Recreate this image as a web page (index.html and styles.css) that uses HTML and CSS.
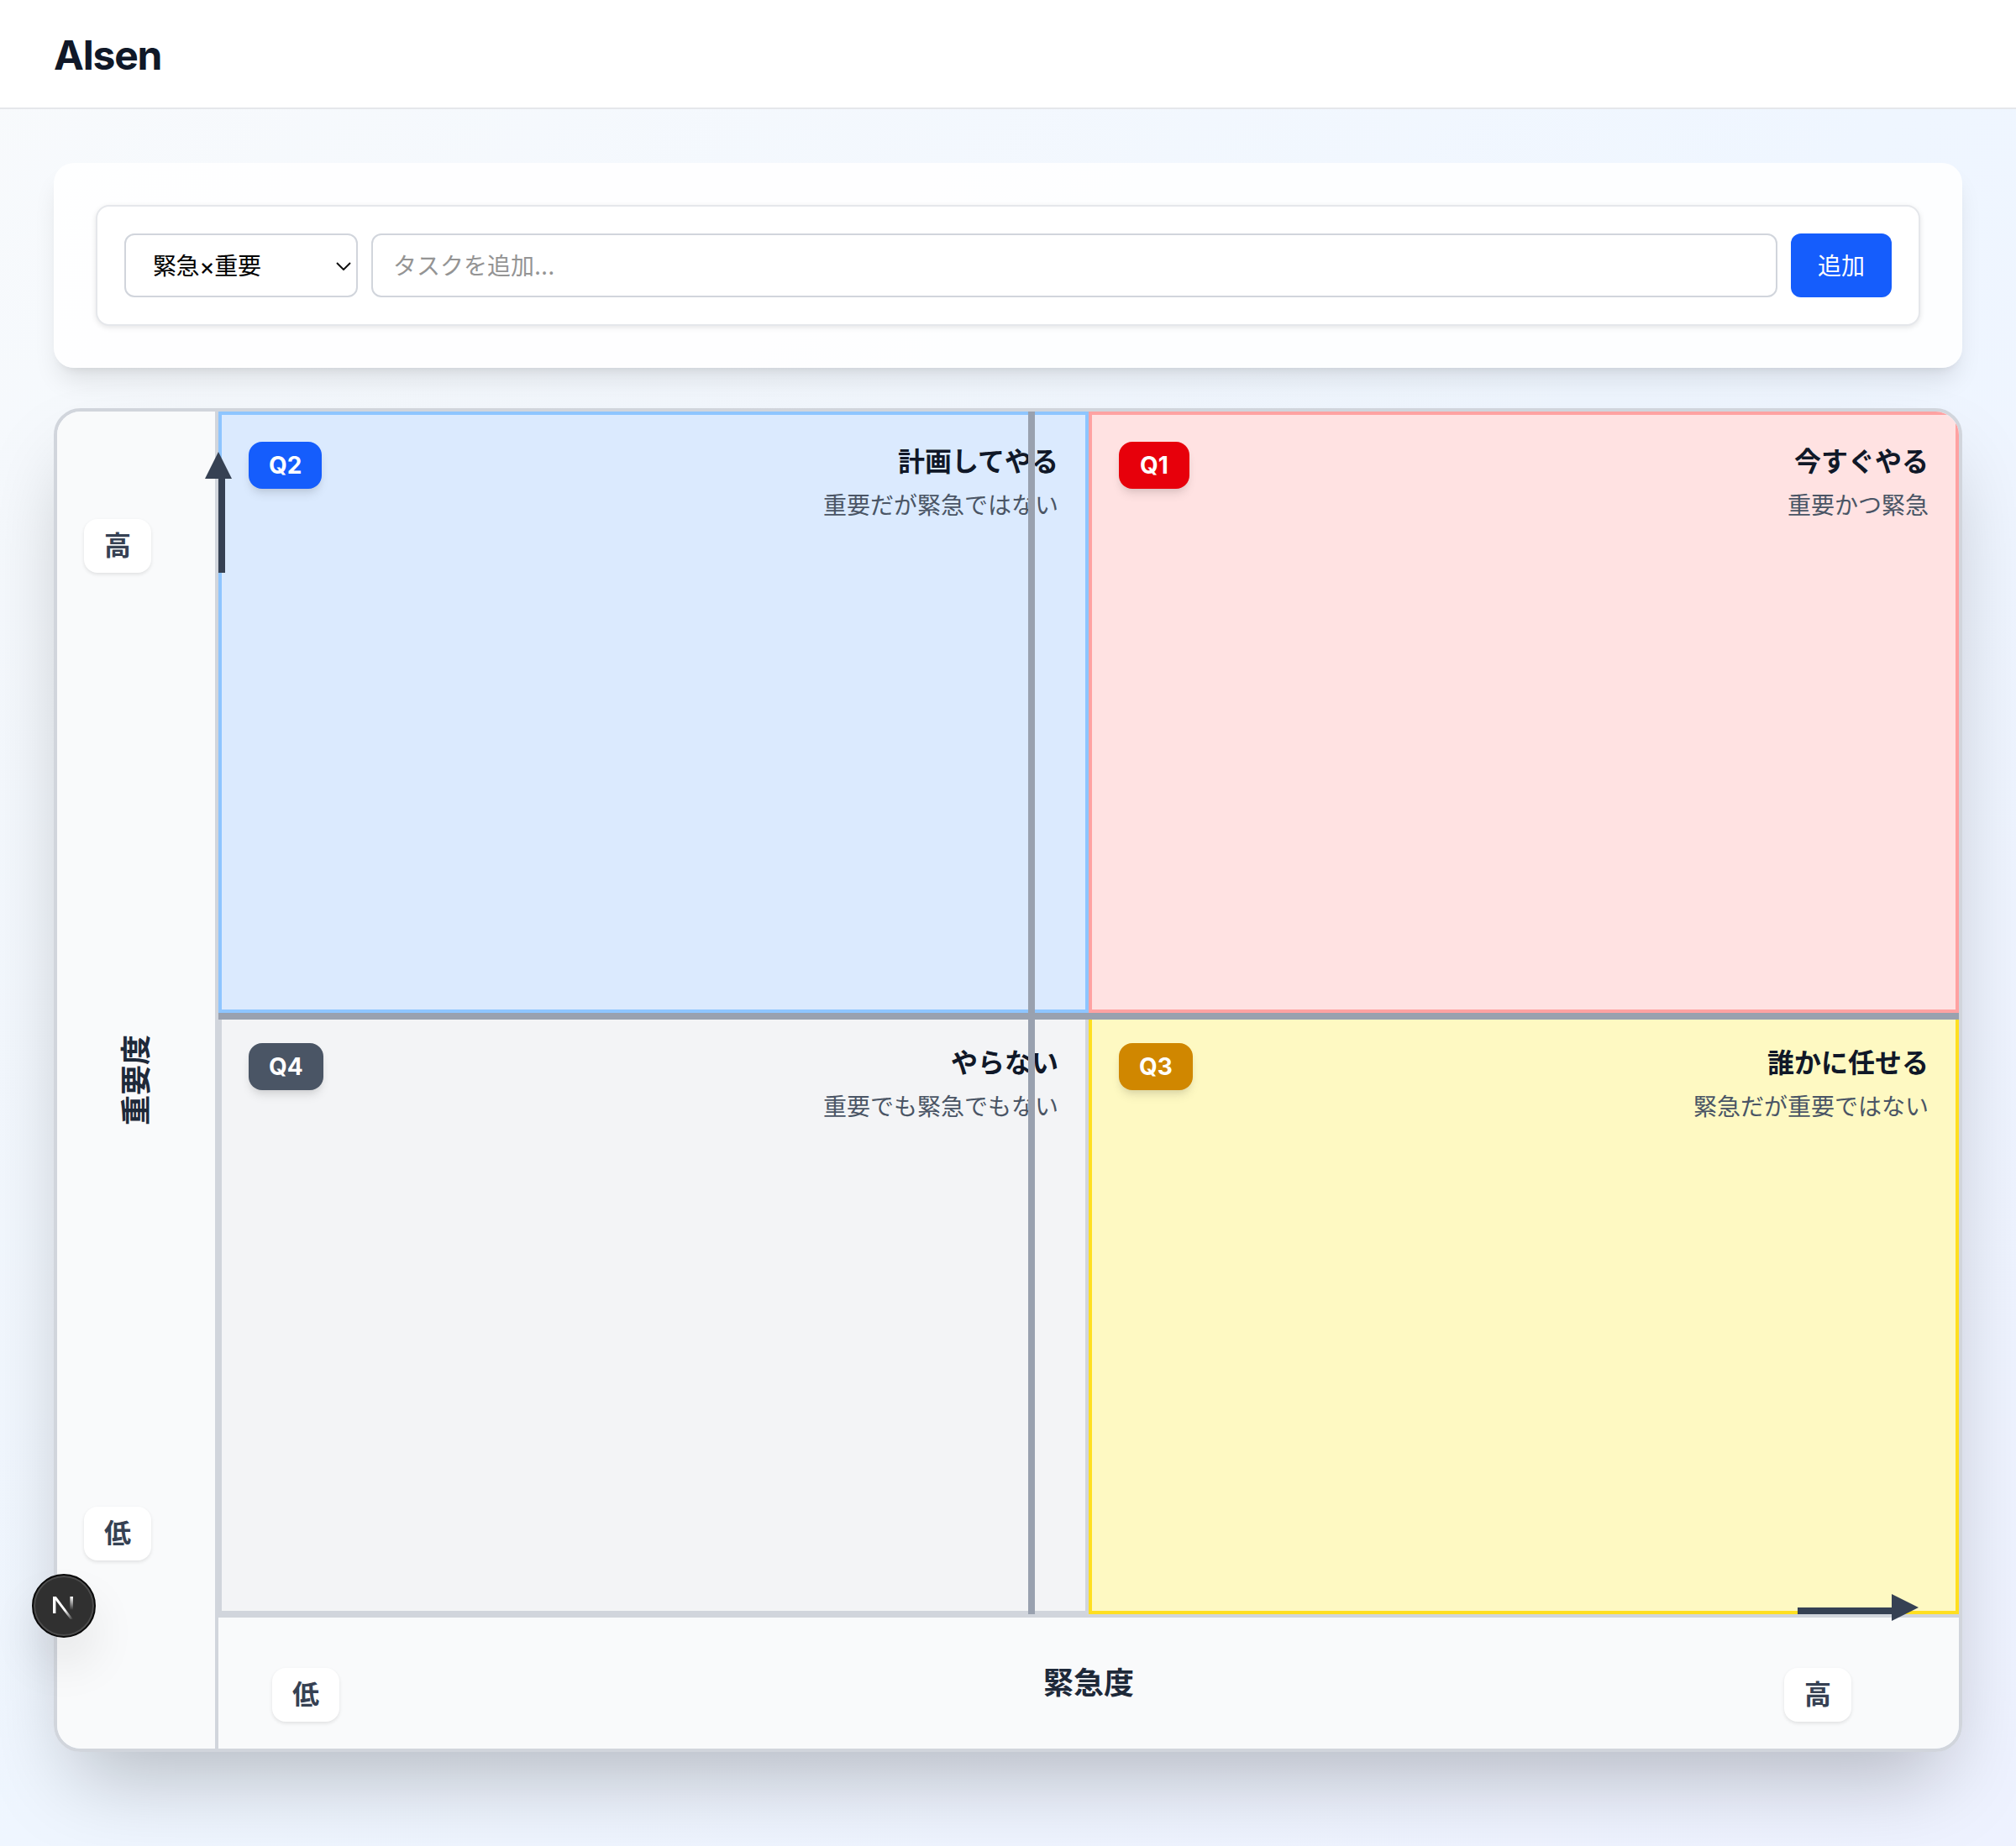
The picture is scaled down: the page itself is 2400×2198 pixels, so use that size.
FILE: index.html
```html
<!DOCTYPE html>
<html lang="ja">
<head>
  <meta charset="UTF-8" />
  <meta name="viewport" content="width=device-width, initial-scale=1.0" />
  <title>Alsen</title>
  <link rel="stylesheet" href="styles.css">
</head>
<body>
  <header class="site-header">
    <h1 class="brand">Alsen</h1>
  </header>

  <main class="page">
    <section class="add-panel">
      <form class="add-form">
        <div class="select-wrap">
          <select class="field quadrant-select">
            <option>緊急×重要</option>
            <option>重要</option>
            <option>緊急</option>
            <option>その他</option>
          </select>
          <svg class="select-chevron" width="18" height="10" viewBox="0 0 18 10">
            <path d="M1 1l8 8 8-8" fill="none" stroke="#111" stroke-width="2" />
          </svg>
        </div>
        <input class="field task-input" type="text" placeholder="タスクを追加..." />
        <button class="add-button" type="button">追加</button>
      </form>
    </section>

    <section class="matrix">
      <div class="y-axis">
        <span class="scale-label y-high">高</span>
        <span class="axis-title y-title">重要度</span>
        <span class="scale-label y-low">低</span>
      </div>

      <div class="quadrants">
        <article class="quadrant q2">
          <span class="badge">Q2</span>
          <div class="quadrant-text">
            <h2>計画してやる</h2>
            <p>重要だが緊急ではない</p>
          </div>
        </article>
        <article class="quadrant q1">
          <span class="badge">Q1</span>
          <div class="quadrant-text">
            <h2>今すぐやる</h2>
            <p>重要かつ緊急</p>
          </div>
        </article>
        <article class="quadrant q4">
          <span class="badge">Q4</span>
          <div class="quadrant-text">
            <h2>やらない</h2>
            <p>重要でも緊急でもない</p>
          </div>
        </article>
        <article class="quadrant q3">
          <span class="badge">Q3</span>
          <div class="quadrant-text">
            <h2>誰かに任せる</h2>
            <p>緊急だが重要ではない</p>
          </div>
        </article>

        <div class="line-v"></div>
        <div class="line-h"></div>
        <div class="arrow-up"></div>
        <div class="arrow-right"></div>
      </div>

      <div class="x-axis">
        <span class="scale-label x-low">低</span>
        <span class="axis-title">緊急度</span>
        <span class="scale-label x-high">高</span>
      </div>
    </section>
  </main>

  <div class="dev-badge">
    <svg width="24" height="27" viewBox="0 0 24 27">
      <defs>
        <linearGradient id="nDiagonal" x1="0" y1="0" x2="1" y2="1">
          <stop offset="0.6" stop-color="#fff" />
          <stop offset="1" stop-color="#fff" stop-opacity="0" />
        </linearGradient>
        <linearGradient id="nStem" x1="0" y1="0" x2="0" y2="1">
          <stop offset="0" stop-color="#fff" />
          <stop offset="1" stop-color="#fff" stop-opacity="0" />
        </linearGradient>
      </defs>
      <path d="M0 0h3.4v20H0z" fill="#fff" />
      <path d="M0 0h3.8L24 27h-3.4z" fill="url(#nDiagonal)" />
      <path d="M20.4 0H24v16h-3.6z" fill="url(#nStem)" />
    </svg>
  </div>
</body>
</html>
```

FILE: styles.css
```css
* {
  box-sizing: border-box;
}
body {
  margin: 0;
  font-family: Inter, "Noto Sans CJK JP", sans-serif;
  background: linear-gradient(to bottom right, #f8fafc, #eff6ff, #eef2ff);
  position: relative;
}
h1, h2, p {
  margin: 0;
}

.site-header {
  height: 130px;
  padding: 0 64px;
  display: flex;
  align-items: center;
  background: #fff;
  border-bottom: 2px solid #e5e7eb;
}
.brand {
  margin-top: 3px;
  font-size: 48px;
  line-height: 64px;
  font-weight: 700;
  letter-spacing: -1.2px;
  color: #101828;
}

.page {
  padding: 64px 64px 112px;
}

.add-panel {
  padding: 50px;
  margin-bottom: 48px;
  background: rgba(255, 255, 255, 0.85);
  border-radius: 24px;
  box-shadow: 0 20px 30px -6px rgba(0, 0, 0, 0.1), 0 8px 12px -8px rgba(0, 0, 0, 0.1);
}
.add-form {
  display: flex;
  gap: 16px;
  padding: 32px;
  background: #fff;
  border: 2px solid #e5e7eb;
  border-radius: 16px;
  box-shadow: 0 2px 6px rgba(0, 0, 0, 0.1);
}
.field {
  height: 76px;
  background: #fff;
  border: 2px solid #d1d5dc;
  border-radius: 12px;
  font-family: inherit;
  font-size: 28px;
  color: #000;
}
.select-wrap {
  position: relative;
  width: 278px;
}
.quadrant-select {
  width: 100%;
  padding: 2px 40px 0 32px;
  appearance: none;
  letter-spacing: -0.4px;
}
.select-chevron {
  position: absolute;
  right: 8px;
  top: 34px;
  pointer-events: none;
}
.task-input {
  flex: 1;
  padding: 2px 24px 0;
}
.task-input::placeholder {
  color: #949494;
}
.add-button {
  width: 120px;
  height: 76px;
  padding: 0 0 2px;
  background: #155dfc;
  border: none;
  border-radius: 12px;
  font-family: inherit;
  font-size: 28px;
  color: #fff;
}

.matrix {
  display: grid;
  grid-template-columns: 192px 1fr;
  grid-template-rows: 1432px 160px;
  border: 4px solid #d1d5dc;
  border-radius: 32px;
  overflow: hidden;
  box-shadow: 0 50px 100px -24px rgba(0, 0, 0, 0.25);
}

.y-axis {
  grid-row: 1 / 3;
  display: grid;
  grid-template-rows: 1fr auto 1fr;
  background: #f9fafb;
  border-right: 4px solid #d1d5dc;
}
.y-high {
  align-self: start;
  justify-self: start;
  margin: 128px 0 0 32px;
}
.y-low {
  align-self: end;
  justify-self: start;
  margin: 0 0 224px 32px;
}
.y-title {
  justify-self: center;
  transform: rotate(-90deg);
}

.x-axis {
  display: grid;
  grid-template-columns: 1fr auto 1fr;
  align-items: center;
  background: #f9fafb;
  border-top: 4px solid #d1d5dc;
}
.x-low {
  justify-self: start;
  align-self: end;
  margin: 0 0 32px 64px;
}
.x-high {
  justify-self: end;
  align-self: end;
  margin: 0 128px 32px 0;
}

.scale-label {
  width: 80px;
  height: 64px;
  padding-bottom: 1px;
  display: flex;
  align-items: center;
  justify-content: center;
  background: #fff;
  border-radius: 16px;
  box-shadow: 0 2px 4px rgba(0, 0, 0, 0.1);
  font-size: 32px;
  line-height: 48px;
  font-weight: 600;
  color: #364153;
}
.axis-title {
  font-size: 36px;
  line-height: 48px;
  font-weight: 700;
  color: #1e2939;
  white-space: nowrap;
}

.quadrants {
  position: relative;
  display: grid;
  grid-template-columns: 1fr 1fr;
  grid-template-rows: 716px 716px;
}
.quadrant {
  display: flex;
  justify-content: space-between;
  align-items: flex-start;
  padding: 32px;
  border: 4px solid;
}
.q1 {
  background: #ffe2e2;
  border-color: #ffa2a2;
}
.q2 {
  background: #dbeafe;
  border-color: #8ec5ff;
}
.q3 {
  background: #fef9c2;
  border-color: #ffdf20;
}
.q4 {
  background: #f3f4f6;
  border-color: #d1d5dc;
}

.badge {
  height: 56px;
  padding: 0 24px;
  display: flex;
  align-items: center;
  justify-content: center;
  border-radius: 16px;
  box-shadow: 0 8px 12px -2px rgba(0, 0, 0, 0.1), 0 4px 8px -4px rgba(0, 0, 0, 0.1);
  font-size: 28px;
  font-weight: 700;
  color: #fff;
}
.q1 .badge {
  min-width: 84px;
  background: #e7000b;
}
.q2 .badge {
  background: #155dfc;
}
.q3 .badge {
  background: #d08700;
}
.q4 .badge {
  background: #4a5565;
}

.quadrant-text {
  text-align: right;
}
.quadrant-text h2 {
  font-size: 32px;
  line-height: 48px;
  font-weight: 700;
  color: #101828;
}
.quadrant-text p {
  margin-top: 8px;
  font-size: 28px;
  line-height: 40px;
  font-weight: 400;
  color: #4a5565;
}

/* overlays on top of the quadrants */
.line-v {
  position: absolute;
  left: 964px;
  top: 0;
  width: 8px;
  height: 1432px;
  background: #99a1af;
}
.line-h {
  position: absolute;
  left: 0;
  top: 716px;
  width: 100%;
  height: 8px;
  background: #99a1af;
}
.arrow-up {
  position: absolute;
  left: 0;
  top: 79px;
  width: 8px;
  height: 113px;
  background: #364153;
}
.arrow-up::before {
  content: "";
  position: absolute;
  left: -16px;
  top: -31px;
  border-left: 16px solid transparent;
  border-right: 16px solid transparent;
  border-bottom: 32px solid #364153;
}
.arrow-right {
  position: absolute;
  left: 1880px;
  top: 1424px;
  width: 112px;
  height: 8px;
  background: #364153;
}
.arrow-right::after {
  content: "";
  position: absolute;
  left: 112px;
  top: -16px;
  border-top: 16px solid transparent;
  border-bottom: 16px solid transparent;
  border-left: 32px solid #364153;
}

.dev-badge {
  position: absolute;
  left: 38px;
  top: 1874px;
  width: 76px;
  height: 76px;
  padding-top: 5px;
  padding-right: 2px;
  display: flex;
  align-items: center;
  justify-content: center;
  background: #303030;
  border: 2px solid #0a0a0a;
  border-radius: 50%;
  box-shadow: inset 0 0 0 2px #4d4d4d, 0 32px 64px -16px rgba(0, 0, 0, 0.24);
}
```
